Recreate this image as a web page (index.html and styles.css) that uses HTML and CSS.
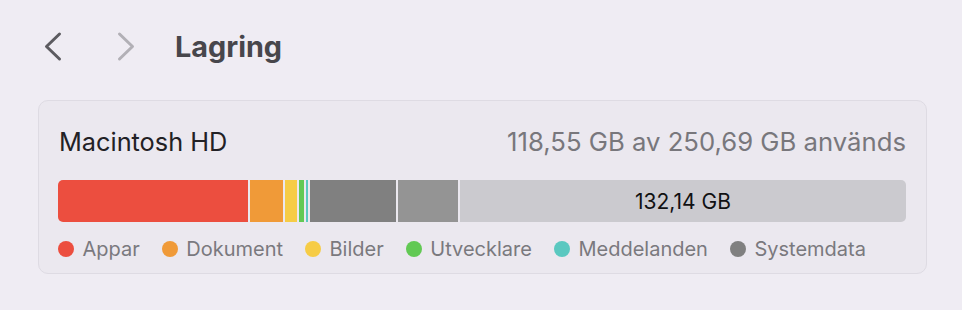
FILE: index.html
```html
<!DOCTYPE html>
<html lang="sv">
<head>
<meta charset="utf-8">
<title>Lagring</title>
<link rel="stylesheet" href="styles.css">
</head>
<body>
<header class="toolbar">
  <button class="nav nav-back" aria-label="Bakåt">
    <svg width="18" height="32" viewBox="0 0 18 32"><path d="M15.5 3 L2.5 15.5 L15.5 28" /></svg>
  </button>
  <button class="nav nav-fwd" aria-label="Framåt">
    <svg width="18" height="32" viewBox="0 0 18 32"><path d="M2.5 3 L15.5 15.5 L2.5 28" /></svg>
  </button>
  <h1 class="title">Lagring</h1>
</header>
<section class="card">
  <div class="card-head">
    <span class="disk-name">Macintosh HD</span>
    <span class="disk-usage">118,55 GB av 250,69 GB används</span>
  </div>
  <div class="bar">
    <span class="seg seg-apps" style="width:190px"></span>
    <span class="seg seg-docs" style="width:33px"></span>
    <span class="seg seg-photos" style="width:12px"></span>
    <span class="seg seg-dev" style="width:5px"></span>
    <span class="seg seg-msg" style="width:2px"></span>
    <span class="seg seg-sys" style="width:86px"></span>
    <span class="seg seg-other" style="width:60px"></span>
    <span class="seg seg-free">132,14 GB</span>
  </div>
  <ul class="legend">
    <li><span class="dot dot-apps"></span>Appar</li>
    <li><span class="dot dot-docs"></span>Dokument</li>
    <li><span class="dot dot-photos"></span>Bilder</li>
    <li><span class="dot dot-dev"></span>Utvecklare</li>
    <li><span class="dot dot-msg"></span>Meddelanden</li>
    <li><span class="dot dot-sys"></span>Systemdata</li>
  </ul>
</section>
</body>
</html>
```
FILE: styles.css
```css
* { box-sizing: border-box; }
html, body { margin: 0; padding: 0; }
body {
  background: #efecf3;
  font-family: Inter, "Noto Sans", "Liberation Sans", sans-serif;
  width: 962px;
  height: 310px;
  overflow: hidden;
}
.toolbar {
  display: flex;
  align-items: center;
  height: 93px;
  padding-left: 44px;
}
.nav {
  border: 0;
  background: none;
  padding: 0;
  margin: 0;
  width: 18px;
  height: 32px;
  display: flex;
}
.nav svg path {
  fill: none;
  stroke-width: 3;
  stroke-linecap: round;
  stroke-linejoin: round;
}
.nav-back svg path { stroke: #5c5b60; }
.nav-fwd { margin-left: 55px; }
.nav-fwd svg path { stroke: #b2b0b6; }
.title {
  margin: 0 0 0 40px;
  font-size: 28.8px;
  font-weight: 700;
  color: #47464b;
  line-height: 34px;
}
.card {
  margin: 7px 35px 0 38px;
  height: 174px;
  background: #ebe8ef;
  border: 1px solid #dedbe3;
  border-radius: 10px;
  padding: 0 20px 0 19px;
}
.card-head {
  display: flex;
  justify-content: space-between;
  align-items: baseline;
  padding-top: 25px;
  line-height: 32px;
}
.disk-name {
  font-size: 25.3px;
  color: #222125;
  padding-left: 1px;
}
.disk-usage {
  font-size: 25.7px;
  color: #78777c;
}
.bar {
  display: flex;
  gap: 2px;
  height: 42px;
  margin-top: 22px;
  border-radius: 5px;
  overflow: hidden;
}
.seg { display: block; height: 100%; }
.seg-apps { background: #ec4e3f; }
.seg-docs { background: #f09a38; }
.seg-photos { background: #f6cc46; }
.seg-dev { background: #62c954; }
.seg-msg { background: #5ac8c0; }
.seg-sys { background: #808080; }
.seg-other { background: #949494; }
.seg-free {
  flex: 1;
  background: #cbcacf;
  display: flex;
  align-items: center;
  justify-content: center;
  font-size: 21px;
  color: #111113;
}
.legend {
  list-style: none;
  margin: 15px 0 0;
  padding: 0;
  display: flex;
  gap: 22px;
}
.legend li {
  display: flex;
  align-items: center;
  gap: 8.5px;
  font-size: 20px;
  color: #7a797e;
  line-height: 24px;
}
.dot {
  width: 16px;
  height: 16px;
  border-radius: 50%;
  display: block;
}
.dot-apps { background: #ec4e3f; }
.dot-docs { background: #f09a38; }
.dot-photos { background: #f6cc46; }
.dot-dev { background: #62c954; }
.dot-msg { background: #5ac8c0; }
.dot-sys { background: #808080; }
```
